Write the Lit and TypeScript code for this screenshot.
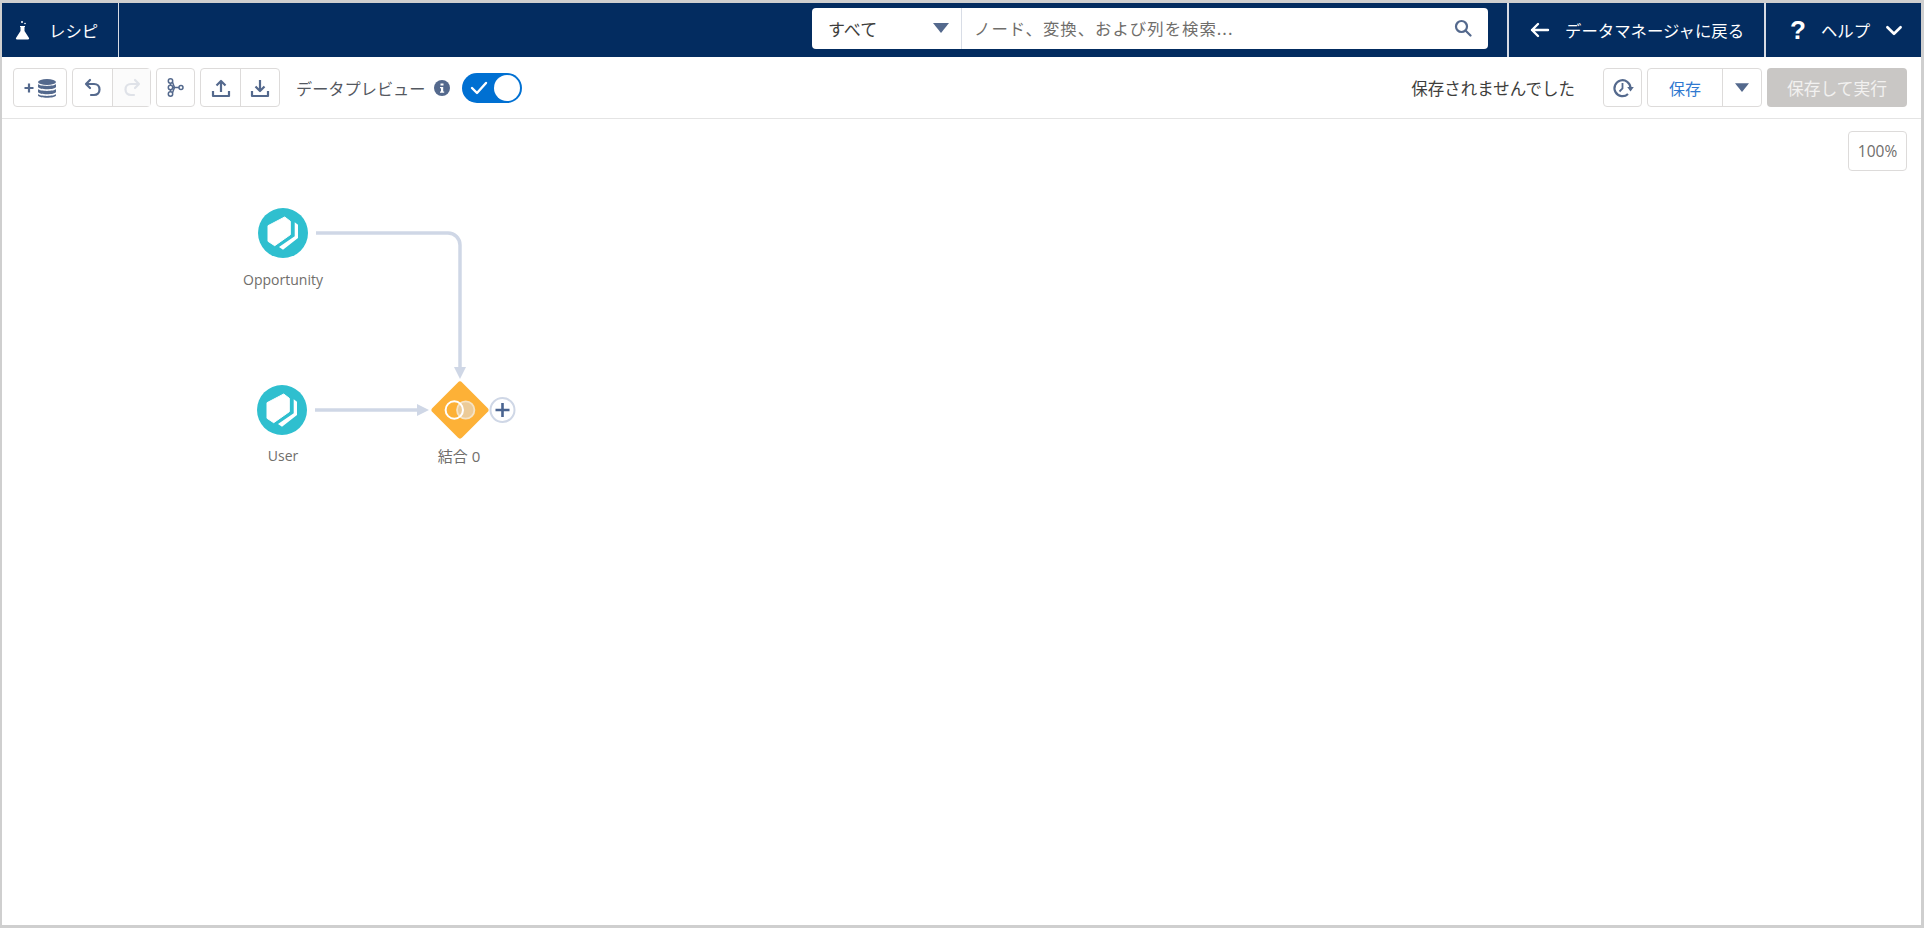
import { LitElement, html, css, svg } from "lit";
import { customElement } from "lit/decorators.js";

const ink = "#54698d";

@customElement("app-root")
export class AppRoot extends LitElement {
  static styles = css`
    :host { display: block; width: 1924px; height: 928px; box-sizing: border-box; background: #fff; font-family: "Noto Sans CJK JP", "Noto Sans", sans-serif; }
    .frame { box-sizing: border-box; width: 1924px; height: 928px; border: solid #cfcfcf; border-width: 3px 3px 3px 2px; display: flex; flex-direction: column; overflow: hidden; }
    header { height: 54px; flex: none; background: #032c60; display: flex; align-items: stretch; color: #fff; font-size: 16.4px; }
    .recipe { width: 117px; box-sizing: border-box; padding-left: 13px; display: flex; align-items: center; gap: 18px; border-right: 1px solid #d6dbe4; }
    .search-wrap { flex: 1; display: flex; align-items: center; justify-content: flex-end; padding-right: 19px; }
    .search { width: 676px; height: 41px; background: #fff; border-radius: 4px; display: flex; align-items: center; margin-top: -4px; color: #3e3e3c; }
    .scope { width: 150px; height: 100%; flex: none; box-sizing: border-box; padding: 0 12px 0 16px; border-right: 1px solid #d8dde6; display: flex; align-items: center; justify-content: space-between; font-size: 17px; }
    .query { flex: 1; padding-left: 12px; color: #706e6b; font-size: 16.4px; letter-spacing: 1px; }
    .search svg.mag { margin-right: 16px; }
    .back { width: 259px; flex: none; box-sizing: border-box; border-left: 2px solid #d6dbe4; border-right: 2px solid #d6dbe4; display: flex; align-items: center; padding-left: 21px; gap: 15px; }
    .help { width: 155px; flex: none; box-sizing: border-box; display: flex; align-items: center; padding-left: 24px; gap: 15px; }
    .help .q { font: bold 26px "Liberation Sans", sans-serif; }
    .toolbar { height: 62px; flex: none; box-sizing: border-box; border-bottom: 1px solid #e4e4e4; display: flex; align-items: center; padding: 0 14px 0 11px; }
    .group { display: flex; height: 39px; box-sizing: border-box; border: 1px solid #dddbda; border-radius: 4px; background: #fff; margin-right: 5px; }
    .group > div { display: flex; align-items: center; justify-content: center; }
    .group > div + div { border-left: 1px solid #dddbda; }
    .group .off { background: #fbfbfb; }
    .label { font-size: 16.2px; color: #54585f; margin-left: 11px; white-space: nowrap; }
    .info { margin-left: 8px; display: flex; }
    .toggle { margin-left: 12px; width: 60px; height: 30px; border-radius: 15px; background: #0070d2; position: relative; display: flex; align-items: center; padding-left: 7px; box-sizing: border-box; }
    .knob { position: absolute; right: 2px; top: 2px; width: 26px; height: 26px; border-radius: 50%; background: #fff; }
    .spacer { flex: 1; }
    .status { font-size: 16.5px; color: #3e3e3c; margin-right: 28px; white-space: nowrap; }
    .save { color: #2f78d0; font-size: 16px; }
    .run { width: 140px; height: 39px; border-radius: 4px; background: #c9c7c5; color: #f2f1f0; font-size: 16.8px; display: flex; align-items: center; justify-content: center; }
    .canvas { flex: 1; position: relative; }
    .zoom { position: absolute; right: 14px; top: 12px; width: 59px; height: 40px; box-sizing: border-box; border: 1px solid #dddbda; border-radius: 4px; display: flex; align-items: center; justify-content: center; font: 15.500px "Open Sans", sans-serif; color: #706e6b; }
    .graph { position: absolute; left: -2px; top: -119px; width: 1924px; height: 928px; }
    .node-label { position: absolute; transform: translateX(-50%); font-family: "Open Sans", "Noto Sans CJK JP", sans-serif; font-size: 14px; line-height: 18px; color: #706e6b; white-space: nowrap; }
    .node-label.join { font-size: 15px; }
  `;

  private dbIcon() {
    return html`<svg width="44" height="26" viewBox="0 0 44 26">
      <path d="M11 8.500v9M6.500 13h9" stroke="${ink}" stroke-width="2.200" fill="none"/>
      <g fill="${ink}">
        <ellipse cx="29" cy="7" rx="9" ry="3"/>
        <path d="M20 9c2 2.500 16 2.500 18 0v3c-1 3-17 3-18 0zM20 14c2 2.500 16 2.500 18 0v3c-1 3-17 3-18 0zM20 19c2 2.500 16 2.500 18 0v1.500c-1 3-17 3-18 0z"/>
      </g></svg>`;
  }
  private arrowBack(color: string, flip = false) {
    return html`<svg width="20" height="20" viewBox="0 0 20 20" style="${flip ? "transform:scaleX(-1)" : ""}" fill="none" stroke="${color}" stroke-width="2.200" stroke-linecap="round" stroke-linejoin="round">
      <path d="M7 2L3 6l4 4M3 6h8c3.500 0 5.500 2.500 5.500 5.500S14.500 17 11 17H8"/></svg>`;
  }
  private tree() {
    return html`<svg width="17" height="19" viewBox="0 0 17 19" fill="none" stroke="${ink}" stroke-width="1.500">
      <circle cx="3.500" cy="3" r="2.200"/><circle cx="3.500" cy="9.500" r="2.200"/><circle cx="3.500" cy="16" r="2.200"/><circle cx="14" cy="9.500" r="2"/>
      <path d="M3.500 5.200v2.100M3.500 11.700v2.100M5.700 9.500H12M5.500 4.200l2 5.300-2 5.300"/></svg>`;
  }
  private tray(up: boolean) {
    return html`<svg width="20" height="20" viewBox="0 0 20 20" fill="none" stroke="${ink}" stroke-width="2.200" stroke-linejoin="round">
      <path d="M2 13v5h16v-5"/>
      ${up ? svg`<path d="M10 14V3M5.500 7.500L10 3l4.500 4.500"/>` : svg`<path d="M10 2v11M5.500 8.500L10 13l4.500-4.500"/>`}
    </svg>`;
  }
  private caret(w = 16, h = 10) {
    return html`<svg width="${w}" height="${h}" viewBox="0 0 16 10"><path d="M0 0h16L8 10z" fill="${ink}"/></svg>`;
  }
  private hex(cx: number, cy: number) {
    return svg`<g transform="translate(${cx - 25} ${cy - 25})">
      <circle cx="25" cy="25" r="25" fill="#2fbfcf"/>
      <path d="M10 17.700L26.700 9l5.600 4.300v13.400L16.700 37.700 10 33.300z" fill="#fff" stroke="#fff" stroke-linejoin="round"/>
      <path d="M36.700 14.300L40 16.700V30L25 41.700 21 39l15.700-10.700z" fill="#fff"/>
    </g>`;
  }

  render() {
    return html`<div class="frame">
      <header>
        <div class="recipe">
          <svg width="16" height="22" viewBox="0 0 16 20" fill="#fff">
            <path d="M5 6h5v1H9.500v4l4.500 7c.3.700 0 1.500-1 1.500H2c-1 0-1.300-.8-1-1.500l4.500-7V7H5z"/>
            <circle cx="7" cy="2" r="1"/><circle cx="10" cy="3.500" r=".8"/>
          </svg>
          <span>レシピ</span>
        </div>
        <div class="search-wrap">
          <div class="search">
            <div class="scope"><span>すべて</span>${this.caret()}</div>
            <div class="query">ノード、変換、および列を検索...</div>
            <svg class="mag" width="18" height="18" viewBox="0 0 18 18" fill="none" stroke="${ink}" stroke-width="2.200" stroke-linecap="round">
              <circle cx="7.500" cy="7.500" r="5.500"/><path d="M12 12l4.500 4.500"/></svg>
          </div>
        </div>
        <div class="back">
          <svg width="20" height="16" viewBox="0 0 20 16" fill="none" stroke="#fff" stroke-width="2.400" stroke-linecap="round" stroke-linejoin="round"><path d="M8 2L2 8l6 6M2 8h16"/></svg>
          <span>データマネージャに戻る</span>
        </div>
        <div class="help">
          <span class="q">?</span><span>ヘルプ</span>
          <svg width="18" height="11" viewBox="0 0 16 10" fill="none" stroke="#fff" stroke-width="2.400" stroke-linecap="round" stroke-linejoin="round"><path d="M2 2l6 6 6-6"/></svg>
        </div>
      </header>
      <div class="toolbar">
        <div class="group"><div style="width:52px">${this.dbIcon()}</div></div>
        <div class="group">
          <div style="width:39px">${this.arrowBack(ink)}</div>
          <div class="off" style="width:37px">${this.arrowBack("#dfe2e8", true)}</div>
        </div>
        <div class="group"><div style="width:37px">${this.tree()}</div></div>
        <div class="group">
          <div style="width:39px">${this.tray(true)}</div>
          <div style="width:38px">${this.tray(false)}</div>
        </div>
        <span class="label">データプレビュー</span>
        <span class="info"><svg width="16" height="16" viewBox="0 0 16 16"><circle cx="8" cy="8" r="8" fill="${ink}"/><path d="M6.500 3.500h3v2h-3zM6 7h3.200v4.500h1v1.200H6v-1.200h1V8.200H6z" fill="#fff"/></svg></span>
        <div class="toggle">
          <svg width="20" height="16" viewBox="0 0 20 16" fill="none" stroke="#fff" stroke-width="2.400" stroke-linecap="round" stroke-linejoin="round"><path d="M3 8l5 5 9-10"/></svg>
          <div class="knob"></div>
        </div>
        <div class="spacer"></div>
        <span class="status">保存されませんでした</span>
        <div class="group"><div style="width:37px">
          <svg width="22" height="22" viewBox="0 0 22 22" fill="none" stroke="${ink}" stroke-width="2.200">
            <path d="M18.500 11A8 8 0 1 0 16 17"/><path d="M10.500 6v5.500l-3 3" stroke-width="1.800"/><path d="M15.200 10h6.600L18.500 14.500z" fill="${ink}" stroke="none"/></svg>
        </div></div>
        <div class="group">
          <div class="save" style="width:74px">保存</div>
          <div style="width:38px">${this.caret(14, 9)}</div>
        </div>
        <div class="run">保存して実行</div>
      </div>
      <div class="canvas">
        <svg class="graph" viewBox="0 0 1924 928" fill="none">
          <path d="M316 233H448a12 12 0 0 1 12 12V367" stroke="#cfd7e6" stroke-width="3.500"/>
          <path d="M454 367h12l-6 12z" fill="#cfd7e6"/>
          <path d="M315 410H418" stroke="#cfd7e6" stroke-width="3.500"/>
          <path d="M417 404l12 6-12 6z" fill="#cfd7e6"/>
          ${this.hex(283, 233)}
          ${this.hex(282, 410)}
          <rect x="439" y="389" width="42" height="42" rx="3" transform="rotate(45 460 410)" fill="#fdb137"/>
          <circle cx="465.700" cy="410" r="8.700" fill="#eccb98" stroke="#f6e3c4" stroke-width="1.800"/>
          <circle cx="454.300" cy="410" r="8.700" stroke="#fff" stroke-width="2"/>
          <circle cx="502.500" cy="410" r="12" fill="#fff" stroke="#cfd7e6" stroke-width="2"/>
          <path d="M495.500 410h14M502.500 403v14" stroke="#4a6490" stroke-width="2.600"/>
        </svg>
        <span class="node-label" style="left:281px;top:152px">Opportunity</span>
        <span class="node-label" style="left:281px;top:328px">User</span>
        <span class="node-label join" style="left:457px;top:328px">結合 0</span>
        <div class="zoom">100%</div>
      </div>
    </div>`;
  }
}
